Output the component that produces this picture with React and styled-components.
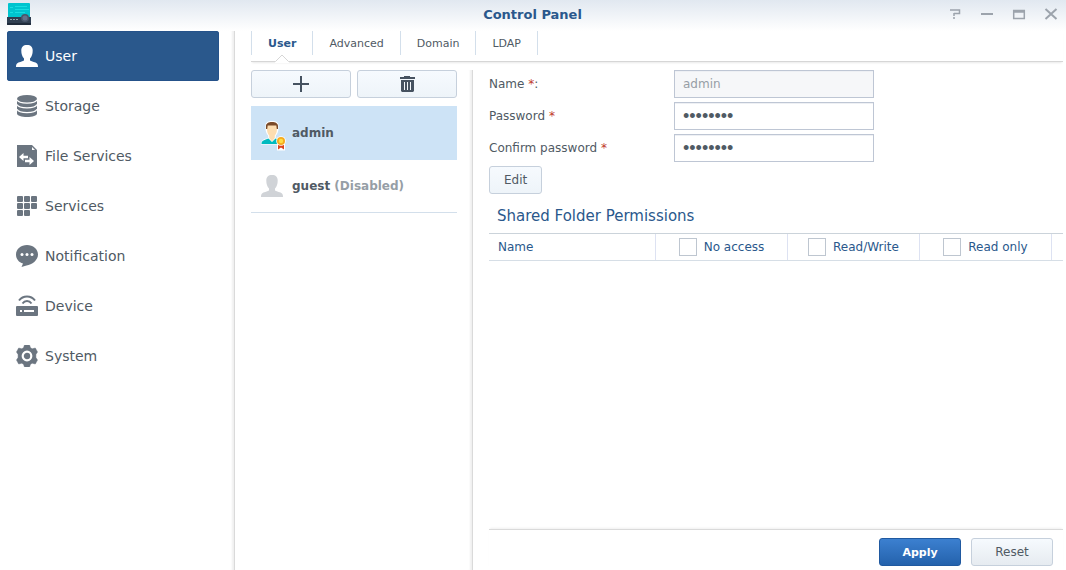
import { useState } from 'react'
import styled, { createGlobalStyle, css } from 'styled-components'

const GlobalStyle = createGlobalStyle`
    * {
        box-sizing: border-box;
    }
    body {
        margin: 0;
        background-color: #FFF;
        color: #505A64;
        font-family: Verdana, "DejaVu Sans", sans-serif;
        font-size: 12px;
    }
    button, input {
        font-family: inherit;
        font-size: inherit;
        color: inherit;
    }
`

const Window = styled.div`
    display: flex;
    flex-direction: column;
    min-height: 100vh;
`
const TitleBar = styled.header`
    display: grid;
    grid-template-columns: 1fr auto 1fr;
    align-items: center;
    height: 31px;
    padding: 0 8px 3px 7px;
    background: linear-gradient(#E1E8F0, #FFF);
`
const WindowTitle = styled.h1`
    color: #2A588C;
    font-size: 13px;
    font-weight: bold;
    margin: 0;
`
const WindowControls = styled.div`
    display: flex;
    gap: 18px;
    justify-content: flex-end;
`
const ControlButton = styled.button`
    background: none;
    border: none;
    cursor: pointer;
    display: flex;
    height: 14px;
    padding: 0;
    width: 14px;
`
const Body = styled.div`
    display: flex;
    flex: 1;
`
const Sidebar = styled.nav`
    border-right: 1px solid #DADADA;
    box-shadow: inset -3px 0 2px -1px #F0F0F0;
    flex: none;
    padding: 0 15px 0 7px;
    width: 235px;
`
const NavItem = styled.a`
    align-items: center;
    border-radius: 3px;
    color: #505A64;
    display: flex;
    font-size: 14px;
    gap: 7px;
    height: 50px;
    padding: 0 9px;
    text-decoration: none;
    ${({ $active }) => $active && css`
        background-color: #2A588C;
        box-shadow: inset 0 0 0 1px #25528A;
        color: #FFF;
    `}
`
const Main = styled.main`
    display: flex;
    flex: 1;
    flex-direction: column;
    min-width: 0;
    padding: 0 3px 0 16px;
`
const TabBar = styled.div`
    border-bottom: 1px solid #D6D6D6;
    box-shadow: 0 2px 2px -1px #EAEAEA;
    display: flex;
    height: 31px;
`
const Tab = styled.button`
    background: none;
    border: none;
    border-left: 1px solid #D3DFEB;
    color: ${({ $active }) => ($active ? '#2A588C' : '#505A64')};
    cursor: pointer;
    font-size: 11px;
    font-weight: ${({ $active }) => ($active ? 'bold' : 'normal')};
    height: 24px;
    padding: 0 16px;
    position: relative;
    &:last-child {
        border-right: 1px solid #D3DFEB;
    }
`
const Notch = styled.svg`
    bottom: -8px;
    left: calc(50% - 8px);
    position: absolute;
`
const Panels = styled.div`
    display: flex;
    flex: 1;
    padding-top: 8px;
`
const ListPanel = styled.section`
    border-right: 1px solid #DADADA;
    box-shadow: inset -3px 0 2px -1px #F0F0F0;
    flex: none;
    padding-right: 15px;
    width: 222px;
`
const Toolbar = styled.div`
    display: flex;
    gap: 6px;
    margin-bottom: 8px;
`
const Button = styled.button`
    align-items: center;
    background: linear-gradient(#F6FAFE, ${({ $to }) => $to || '#EEF4F9'});
    border: 1px solid #C6D0DC;
    border-radius: 3px;
    cursor: pointer;
    display: flex;
    height: 28px;
    justify-content: center;
    padding: 0 14px;
    ${({ $primary }) => $primary && css`
        background: linear-gradient(#3C80D0, #2462AC);
        border-color: #2059A0;
        color: #FFF;
        font-size: 11px;
        font-weight: bold;
    `}
`
const ToolButton = styled(Button)`
    flex: 1;
`
const FooterButton = styled(Button)`
    width: 82px;
`
const UserList = styled.ul`
    list-style: none;
    margin: 0;
    padding: 0;
`
const UserRow = styled.li`
    align-items: center;
    background-color: ${({ $selected }) => ($selected ? '#CDE3F6' : 'transparent')};
    border-bottom: 1px solid ${({ $selected }) => ($selected ? '#CDE3F6' : '#D3DFEB')};
    display: flex;
    font-weight: bold;
    gap: 5px;
    height: ${({ $selected }) => ($selected ? 54 : 53)}px;
    padding: 0 10px;
`
const Status = styled.span`
    color: #969EA6;
`
const Detail = styled.section`
    display: flex;
    flex: 1;
    flex-direction: column;
    min-width: 0;
    padding-left: 16px;
`
const Form = styled.form`
    align-items: flex-start;
    display: flex;
    flex-direction: column;
    gap: 4px;
`
const Field = styled.div`
    align-items: center;
    display: flex;
    height: 28px;
`
const Label = styled.label`
    width: 185px;
`
const Required = styled.span`
    color: #C0392B;
`
const TextInput = styled.input`
    background-color: #FFF;
    border: 1px solid #BEC6D4;
    box-shadow: inset 0 1px 0 #EEF0F4;
    height: 28px;
    outline: none;
    padding: 0 8px;
    width: 200px;
    &:disabled {
        background-color: #F6F7F9;
        color: #969EA6;
    }
    &[type='password'] {
        font-family: "Liberation Sans", Arial, sans-serif;
        font-size: 18px;
    }
`
const SectionTitle = styled.h2`
    color: #2A588C;
    font-size: 15px;
    font-weight: normal;
    line-height: 20px;
    margin: 0;
    padding: 12px 8px 7px;
`
const Table = styled.table`
    border-bottom: 1px solid #D6DEE6;
    border-collapse: separate;
    border-spacing: 0;
    border-top: 1px solid #CBD3DA;
    color: #2A588C;
    font-size: 12px;
    table-layout: fixed;
    width: 100%;
`
const HeadCell = styled.th`
    border-right: 1px solid #DDE2F2;
    font-weight: normal;
    height: 26px;
    padding: 0 9px;
    text-align: left;
    width: ${({ $width }) => $width || 'auto'};
`
const EndCell = styled.td`
    padding: 0;
    width: 11px;
`
const CheckLabel = styled.label`
    align-items: center;
    display: flex;
    gap: 7px;
    justify-content: center;
    white-space: nowrap;
`
const Checkbox = styled.input`
    appearance: none;
    background-color: #FFF;
    border: 1px solid #BEC6D0;
    height: 18px;
    margin: 0;
    width: 18px;
    &:checked {
        background-color: #2A588C;
    }
`
const Footer = styled.footer`
    border-top: 1px solid #DADADA;
    box-shadow: 0 -2px 2px -1px #F0F0F0;
    display: flex;
    gap: 10px;
    justify-content: flex-end;
    margin-top: auto;
    padding: 8px 10px 4px 0;
`

const IconBox = ({ children, size = 22, ...rest }) => (
    <svg width={size} height={size} viewBox={`0 0 ${size} ${size}`} aria-hidden="true" {...rest}>
        {children}
    </svg>
)

const personPath = 'M11 0C14.800 0 16.700 2 16.700 5.500C16.700 9 15.800 11.500 14 13.500V15.500C16 17 19.500 16.700 21 18.500C21.800 19.500 22 20.500 22 22H0C0 20.500 .2 19.500 1 18.500C2.500 16.700 6 17 8 15.500V13.500C6.200 11.500 5.300 9 5.300 5.500C5.300 2 7.200 0 11 0Z'

const PersonIcon = ({ color }) => (
    <IconBox fill={color}>
        <path d={personPath} />
    </IconBox>
)

const StorageIcon = () => (
    <IconBox fill="#6B7580">
        <path d="M1 4V18.500C1 20.500 5.500 22 11 22S21 20.500 21 18.500V4Z" />
        <ellipse cx="11" cy="3.800" rx="10" ry="3.800" />
        <path d="M1 4.800C2 7 6 8.200 11 8.200S20 7 21 4.800M1 9.500C2 11.700 6 12.900 11 12.900S20 11.700 21 9.500M1 14.200C2 16.400 6 17.600 11 17.600S20 16.400 21 14.200" fill="none" stroke="#FFF" strokeWidth="1.200" />
    </IconBox>
)

const FileServicesIcon = () => (
    <IconBox fill="#6B7580">
        <path d="M1 0H16L21 5V22H1Z" />
        <path d="M16 2V5H19Z" fill="#FFF" />
        <path d="M3 12L7.500 8V10.800H12V13.200H7.500V16Z" fill="#FFF" />
        <path d="M18 16L13.500 12V14.800H9V17.200H13.500V20Z" fill="#FFF" />
    </IconBox>
)

const ServicesIcon = () => (
    <IconBox fill="#6B7580">
        {[[1, 1], [8, 1], [15, 1], [1, 8], [8, 8], [15, 8], [1, 15], [8, 15]].map(([x, y]) => (
            <rect key={`${x}-${y}`} x={x} y={y} width="6" height="6" rx="1" />
        ))}
    </IconBox>
)

const NotificationIcon = () => (
    <IconBox fill="#6B7580">
        <path d="M11 0C17 0 22 4 22 9.500C22 15.500 16 19.500 10.500 20.500L5.500 22L7 18.500C3 17.500 0 14 0 9.500C0 4 5 0 11 0Z" />
        <circle cx="6" cy="9.500" r="1.500" fill="#FFF" />
        <circle cx="11" cy="9.500" r="1.500" fill="#FFF" />
        <circle cx="16" cy="9.500" r="1.500" fill="#FFF" />
    </IconBox>
)

const DeviceIcon = () => (
    <IconBox fill="#6B7580">
        <rect x="0" y="11" width="22" height="10" rx="1" />
        <rect x="4" y="15" width="2" height="2" fill="#FFF" />
        <rect x="8" y="15" width="10" height="2" fill="#FFF" />
        <path d="M3 5.500C7 .2 15 .2 19 5.500M6.500 8.500C8.800 5.200 13.200 5.200 15.500 8.500" fill="none" stroke="#6B7580" strokeWidth="2" />
    </IconBox>
)

const SystemIcon = () => (
    <IconBox fill="#6B7580">
        <path d="M8.500 0H13.500L14.500 2.800L16.200 3.800L19.300 3L21.500 7L19.900 9.500V12.500L21.500 15L19.300 19L16.200 18.200L14.500 19.200L13.500 22H8.500L7.500 19.200L5.800 18.200L2.700 19L.5 15L2.100 12.500V9.500L.5 7L2.700 3L5.800 3.800L7.500 2.800Z" stroke="#6B7580" strokeLinejoin="round" strokeWidth=".5" />
        <circle cx="11" cy="11" r="4.300" fill="none" stroke="#FFF" strokeWidth="2.200" />
    </IconBox>
)

const AdminIcon = () => (
    <IconBox size={26} overflow="visible">
        <path d="M4.500 8V5C4.500 2.500 7 1 11 1S17.500 2.500 17.500 5V8C17.500 12 16 14.500 14.800 15.500V18C19 19 22 20 22 24.500H0C0 20 3 19 7.200 18V15.500C6 14.500 4.500 12 4.500 8Z" fill="#FFF" />
        <path d="M.5 24C.5 20.500 3.500 19.800 7.500 18.500L11 22L14.500 18.500C18.500 19.800 21.500 20.500 21.500 24Z" fill="#00BABF" />
        <path d="M6 5H16V9C16 12.500 14.800 14.500 13.800 15.500V18L11 21.500L8.200 18V15.500C7.200 14.500 6 12.500 6 9Z" fill="#FDDDB0" />
        <path d="M5 9V6C5 3.500 7.500 2 11 2S17 3.500 17 6V9H15.800L15.300 5.500H6.700L6.200 9Z" fill="#7A4A28" />
        <path d="M16 21H24V30.500H16Z" fill="#FFF" />
        <path d="M17 22H23V29.500L20 27.500L17 29.500Z" fill="#DD431D" />
        <circle cx="20" cy="21" r="4.800" fill="#FFF" />
        <circle cx="20" cy="21" r="4" fill="#F5AB20" />
        <circle cx="20" cy="21" r="2.200" fill="#FFDD45" />
    </IconBox>
)

const AppIcon = () => (
    <svg width="24" height="22" viewBox="0 0 24 22" aria-hidden="true">
        <rect x="1" y="0" width="22" height="15" rx="1" fill="#00C4CF" />
        <path d="M3 4.500H6M8 3.500H20M3 9.500H6M8 6.500H22M8 9.500H18" stroke="#18DDE2" />
        <path d="M0 14H24V21C24 21.600 23.600 22 23 22H1C.4 22 0 21.600 0 21Z" fill="#303F52" />
        <path d="M0 20H24V21C24 21.600 23.600 22 23 22H1C.4 22 0 21.600 0 21Z" fill="#1F2B3B" />
        <path d="M3 16.500H5M6 16.500H8M9 16.500H11" stroke="#95A3AC" />
        <circle cx="18" cy="15" r="4" fill="#48566B" />
        <circle cx="18" cy="15" r="2.500" fill="#65718A" />
    </svg>
)

const PlusIcon = () => (
    <IconBox size={16}>
        <path d="M8 0V16M0 8H16" stroke="#465260" strokeWidth="2" />
    </IconBox>
)

const TrashIcon = () => (
    <IconBox size={16} fill="#465260">
        <path d="M5 0H11V1H16V3H1V1H5ZM2 4H15V15L14 16H3L2 15Z" />
        <path d="M5.500 6V14M8.500 6V14M11.500 6V14" stroke="#F2F6FA" />
    </IconBox>
)

const controls = [
    { label: 'Help', d: 'M2 3H11.500V6.500H6M6 6V9M5 11H7', width: 1.5 },
    { label: 'Minimize', d: 'M1 7H13', width: 2 },
    { label: 'Maximize', d: 'M1 3.500H13M1 5H13M1.700 3V12M12.300 3V12M1 11.500H13', width: 1.5 },
    { label: 'Close', d: 'M1.500 2L12.500 12M12.500 2L1.500 12', width: 2 },
]

const sections = [
    { name: 'User', Icon: () => <PersonIcon color="#FFF" /> },
    { name: 'Storage', Icon: StorageIcon },
    { name: 'File Services', Icon: FileServicesIcon },
    { name: 'Services', Icon: ServicesIcon },
    { name: 'Notification', Icon: NotificationIcon },
    { name: 'Device', Icon: DeviceIcon },
    { name: 'System', Icon: SystemIcon },
]

const tabs = ['User', 'Advanced', 'Domain', 'LDAP']
const permissions = ['No access', 'Read/Write', 'Read only']

function App () {
    const [tab, setTab] = useState('User')

    return (
        <Window>
            <GlobalStyle />
            <TitleBar>
                <AppIcon />
                <WindowTitle>Control Panel</WindowTitle>
                <WindowControls>
                    {controls.map(({ label, d, width }) => (
                        <ControlButton key={label} aria-label={label}>
                            <IconBox size={14}>
                                <path d={d} fill="none" stroke="#9CA3AC" strokeWidth={width} />
                            </IconBox>
                        </ControlButton>
                    ))}
                </WindowControls>
            </TitleBar>
            <Body>
                <Sidebar>
                    {sections.map(({ name, Icon }) => (
                        <NavItem key={name} href="#" $active={name === 'User'}>
                            <Icon />
                            {name}
                        </NavItem>
                    ))}
                </Sidebar>
                <Main>
                    <TabBar>
                        {tabs.map((name) => (
                            <Tab key={name} $active={name === tab} onClick={() => setTab(name)}>
                                {name}
                                {name === tab && (
                                    <Notch width="16" height="9" viewBox="0 0 16 9" aria-hidden="true">
                                        <path d="M1 9V7.500L8 .8L15 7.500V9Z" fill="#FFF" />
                                        <path d="M0 7.500H1.500L8 1L14.500 7.500H16" fill="none" stroke="#D6D6D6" />
                                    </Notch>
                                )}
                            </Tab>
                        ))}
                    </TabBar>
                    <Panels>
                        <ListPanel>
                            <Toolbar>
                                <ToolButton aria-label="Add user"><PlusIcon /></ToolButton>
                                <ToolButton aria-label="Delete user"><TrashIcon /></ToolButton>
                            </Toolbar>
                            <UserList>
                                <UserRow $selected>
                                    <AdminIcon />
                                    <span>admin</span>
                                </UserRow>
                                <UserRow>
                                    <IconBox size={26} fill="#D0D3D7">
                                        <path d={personPath} transform="translate(0 2)" />
                                    </IconBox>
                                    <span>guest <Status>(Disabled)</Status></span>
                                </UserRow>
                            </UserList>
                        </ListPanel>
                        <Detail>
                            <Form onSubmit={(e) => e.preventDefault()}>
                                <Field>
                                    <Label htmlFor="name">Name <Required>*</Required>:</Label>
                                    <TextInput id="name" type="text" defaultValue="admin" disabled />
                                </Field>
                                <Field>
                                    <Label htmlFor="password">Password <Required>*</Required></Label>
                                    <TextInput id="password" type="password" defaultValue="12345678" />
                                </Field>
                                <Field>
                                    <Label htmlFor="confirm">Confirm password <Required>*</Required></Label>
                                    <TextInput id="confirm" type="password" defaultValue="12345678" />
                                </Field>
                                <Button type="button">Edit</Button>
                            </Form>
                            <SectionTitle>Shared Folder Permissions</SectionTitle>
                            <Table>
                                <thead>
                                    <tr>
                                        <HeadCell>Name</HeadCell>
                                        {permissions.map((name) => (
                                            <HeadCell key={name} $width="132px">
                                                <CheckLabel>
                                                    <Checkbox type="checkbox" />
                                                    {name}
                                                </CheckLabel>
                                            </HeadCell>
                                        ))}
                                        <EndCell />
                                    </tr>
                                </thead>
                            </Table>
                            <Footer>
                                <FooterButton $primary>Apply</FooterButton>
                                <FooterButton $to="#E6EBF0">Reset</FooterButton>
                            </Footer>
                        </Detail>
                    </Panels>
                </Main>
            </Body>
        </Window>
    )
}
export default App
